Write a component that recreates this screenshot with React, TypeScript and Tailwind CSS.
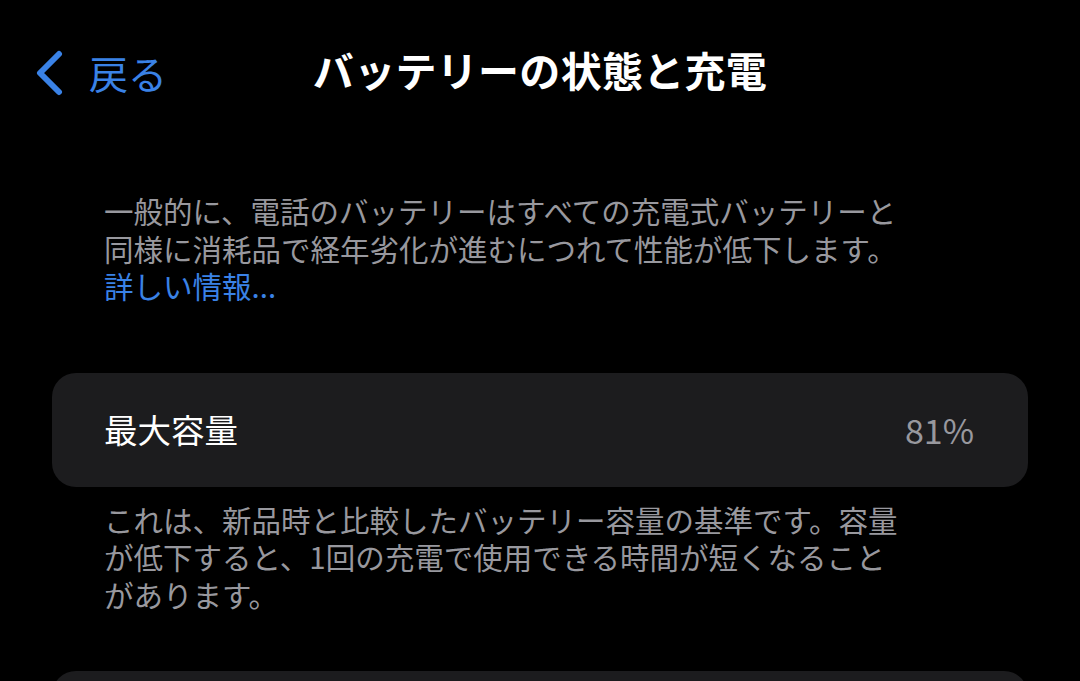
import React from "react";

export default function App() {
  return (
    <div
      className="w-[1080px] h-[681px] overflow-hidden bg-black text-white"
      style={{ fontFamily: '"Noto Sans CJK JP", "Noto Sans", sans-serif' }}
    >
      <div className="relative h-[140px] flex items-start justify-center pt-[40px]">
        <div className="absolute left-[34px] top-[50px] flex items-center text-[#3a82e6]">
          <svg width="30" height="46" viewBox="0 0 30 46" fill="none">
            <path d="M25 4 L6 23 L25 42" stroke="#3a82e6" strokeWidth="6" strokeLinecap="round" strokeLinejoin="round" />
          </svg>
          <span className="ml-[25px] text-[39px] leading-[44px] -mt-[2px]">戻る</span>
        </div>
        <h1 className="text-[41px] leading-[58px] font-bold tracking-[0.3px]">バッテリーの状態と充電</h1>
      </div>

      <div className="px-[104px] pt-[52px] text-[29.5px] leading-[37.5px] text-[#98989e]">
        <p>
          一般的に、電話のバッテリーはすべての充電式バッテリーと
          <br />
          同様に消耗品で経年劣化が進むにつれて性能が低下します。
          <br />
          <span className="text-[#3a82e6]">詳しい情報...</span>
        </p>
      </div>

      <div className="mx-[52px] mt-[68px] h-[114px] rounded-[24px] bg-[#1c1c1e] flex items-center justify-between pl-[52px] pr-[54px]">
        <span className="text-[33.5px]">最大容量</span>
        <span className="text-[34px] text-[#98989e]">81%</span>
      </div>

      <div className="px-[104px] pt-[14px] text-[29.5px] leading-[37.5px] text-[#98989e]">
        <p>
          これは、新品時と比較したバッテリー容量の基準です。容量
          <br />
          が低下すると、1回の充電で使用できる時間が短くなること
          <br />
          があります。
        </p>
      </div>

      <div className="mx-[52px] mt-[58px] h-[120px] rounded-[24px] bg-[#1c1c1e]" />
    </div>
  );
}
